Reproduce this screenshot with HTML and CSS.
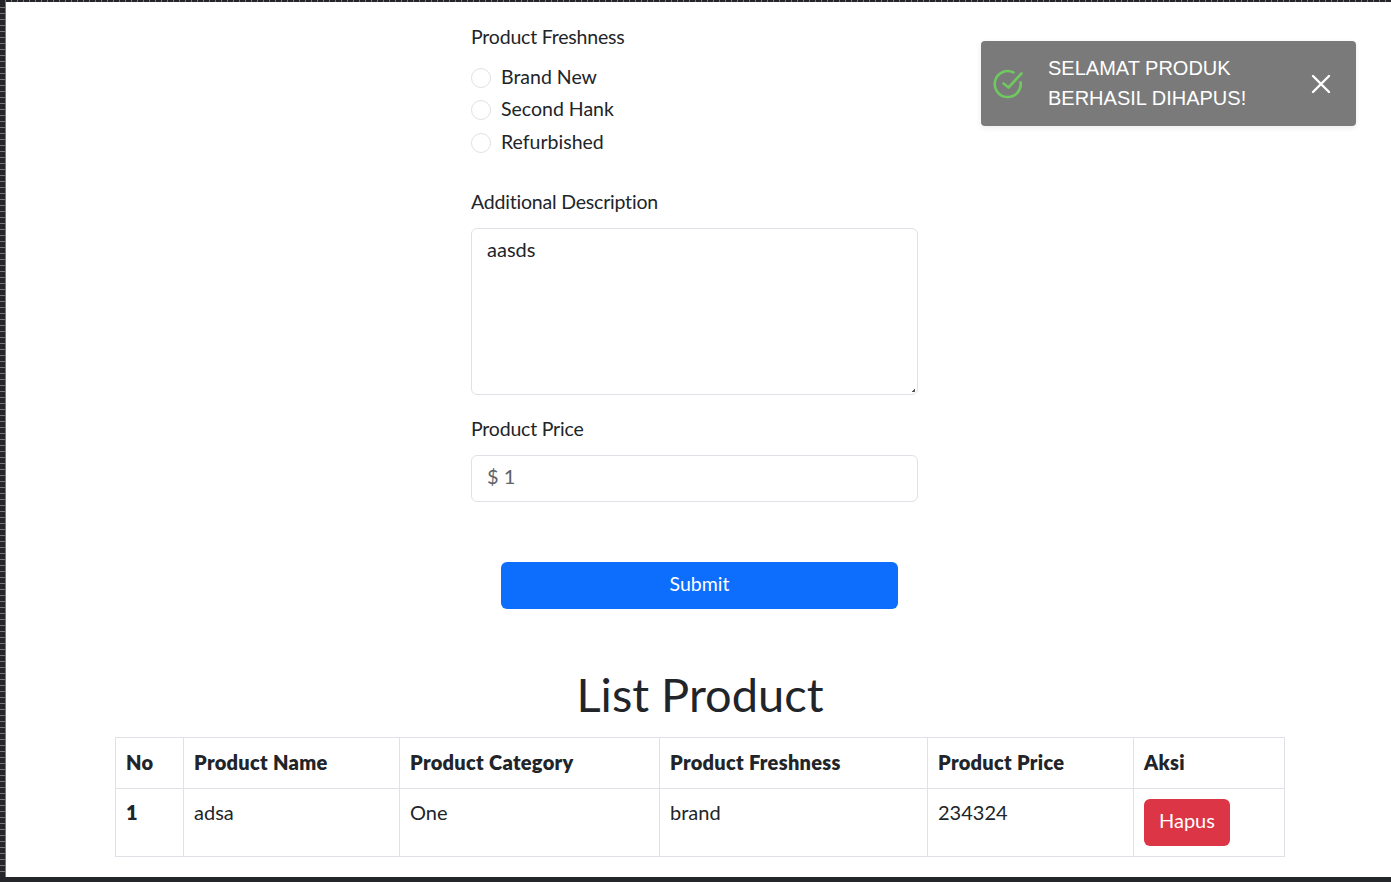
FILE: index.html
```html
<!DOCTYPE html>
<html lang="en">
<head>
<meta charset="utf-8">
<title>Product</title>
<link rel="stylesheet" href="styles.css">
</head>
<body>
<div class="strip-top"></div>
<div class="shell">
  <div class="strip-left"></div>
  <main class="page">
    <form class="form">
      <div class="label first">Product Freshness</div>
      <div class="radios">
        <label class="radio"><span class="dot"></span>Brand New</label>
        <label class="radio"><span class="dot"></span>Second Hank</label>
        <label class="radio"><span class="dot"></span>Refurbished</label>
      </div>
      <div class="label desc">Additional Description</div>
      <div class="textarea">aasds<span class="grip"></span></div>
      <div class="label price">Product Price</div>
      <div class="input">$ 1</div>
      <div class="submit-row"><button type="button" class="submit">Submit</button></div>
    </form>
    <h2 class="title">List Product</h2>
    <table class="table">
      <colgroup>
        <col class="c1"><col class="c2"><col class="c3"><col class="c4"><col class="c5"><col class="c6">
      </colgroup>
      <thead>
        <tr><th>No</th><th>Product Name</th><th>Product Category</th><th>Product Freshness</th><th>Product Price</th><th>Aksi</th></tr>
      </thead>
      <tbody>
        <tr><th>1</th><td>adsa</td><td>One</td><td>brand</td><td>234324</td><td class="action"><button type="button" class="danger">Hapus</button></td></tr>
      </tbody>
    </table>
  </main>
</div>
<div class="strip-bottom"></div>
<div class="toast">
  <svg class="toast-check" width="30" height="30" viewBox="0 0 30 30" fill="none" stroke="#6fc95f" stroke-width="2.6" stroke-linecap="round" stroke-linejoin="round">
    <path d="M27.6 13.2A13 13 0 1 1 20.5 3.4"/>
    <path d="M10.5 14.5l5 4L28.5 4.5"/>
  </svg>
  <div class="toast-text">SELAMAT PRODUK<br>BERHASIL DIHAPUS!</div>
  <svg class="toast-close" width="20" height="20" viewBox="0 0 20 20" fill="none" stroke="#fff" stroke-width="2.4" stroke-linecap="round">
    <path d="M2 2l16 16M18 2L2 18"/>
  </svg>
</div>
</body>
</html>
```
FILE: styles.css
```css
* { box-sizing: border-box; }
html, body { margin: 0; height: 882px; overflow: hidden; }
body {
  display: flex;
  flex-direction: column;
  background: #fff;
  color: #212529;
  font-family: "Lato", "Open Sans", sans-serif;
  font-size: 20px;
  position: relative;
}
.strip-top {
  height: 2px;
  flex: none;
  background: repeating-linear-gradient(90deg, #25262a 0 5px, #777 5px 6px);
}
.strip-left {
  width: 6px;
  flex: none;
  background: repeating-linear-gradient(180deg, #25262a 0 5px, #777 5px 6px);
  border-right: 1px solid #777;
}
.strip-bottom { height: 5px; flex: none; background: #25262a; }
.shell { flex: 1; display: flex; min-height: 0; }
.page { flex: 1; display: flex; flex-direction: column; min-width: 0; padding-left: 109px; }
.form { width: 447px; margin-left: 356px; display: flex; flex-direction: column; }
.label { font-size: 19.5px; line-height: 24px; letter-spacing: -.2px; }
.label.first { margin-top: 23px; }
.radios { margin-top: 16px; display: flex; flex-direction: column; gap: 8.4px; }
.radio { display: flex; align-items: center; gap: 10px; height: 24px; line-height: 24px; font-size: 19.5px; }
.dot { width: 20px; height: 20px; margin-top: 2px; border-radius: 50%; border: 1px solid #dee2e6; background: #fff; flex: none; }
.label.desc { margin-top: 36.2px; }
.textarea {
  position: relative;
  margin-top: 14px;
  height: 167px;
  border: 1px solid #dee2e6;
  border-radius: 6px;
  padding: 7px 15px;
  line-height: 26px;
}
.grip {
  position: absolute;
  right: 2px;
  bottom: 2px;
  width: 3px;
  height: 3px;
  background: linear-gradient(135deg, transparent 40%, #555 40%);
}
.label.price { margin-top: 22px; }
.input {
  margin-top: 14px;
  height: 47px;
  border: 1px solid #dee2e6;
  border-radius: 6px;
  padding: 8px 15px;
  line-height: 24px;
  color: #5c636a;
}
.submit-row { margin-top: 60px; padding: 0 20px 0 30px; }
.submit {
  display: block;
  width: 100%;
  height: 47px;
  border: 0;
  padding: 0 0 4px;
  border-radius: 6px;
  background: #0d6efd;
  color: #fff;
  font: inherit;
  font-size: 19.5px;
}
.title {
  margin: 56px 0 0;
  width: 1170px;
  text-align: center;
  font-size: 47px;
  font-weight: 400;
  line-height: 58px;
}
.table {
  margin-top: 14px;
  width: 1169px;
  border-collapse: collapse;
  table-layout: fixed;
}
.c1 { width: 68px; }
.c2 { width: 216px; }
.c3 { width: 260px; }
.c4 { width: 268px; }
.c5 { width: 206px; }
.c6 { width: 151px; }
.table th, .table td {
  border: 1px solid #dee2e6;
  padding: 9px 10px 11px;
  text-align: left;
  vertical-align: top;
  line-height: 30px;
}
.table thead th { font-weight: 800; letter-spacing: .3px; }
.table tbody th { font-weight: 800; }
.table tbody th, .table tbody td { padding-top: 8px; }
.table tbody td.action { padding: 10px 10px 10px; }
.danger {
  display: block;
  height: 47px;
  padding: 0 15px 5px;
  border: 0;
  border-radius: 6px;
  background: #dc3545;
  color: #fff;
  font: inherit;
}
.toast {
  position: absolute;
  left: 981px;
  top: 41px;
  width: 375px;
  height: 85px;
  display: flex;
  align-items: center;
  background: #7a7a7a;
  border-radius: 4px;
  box-shadow: 0 2px 6px rgba(0, 0, 0, .08);
  color: #fff;
}
.toast-check { margin-left: 12px; flex: none; }
.toast-text {
  margin: 0 0 2px 25px;
  flex: 1;
  font-family: "Liberation Sans", Arial, sans-serif;
  font-size: 20px;
  line-height: 30px;
}
.toast-close { margin-right: 25px; flex: none; }
```
